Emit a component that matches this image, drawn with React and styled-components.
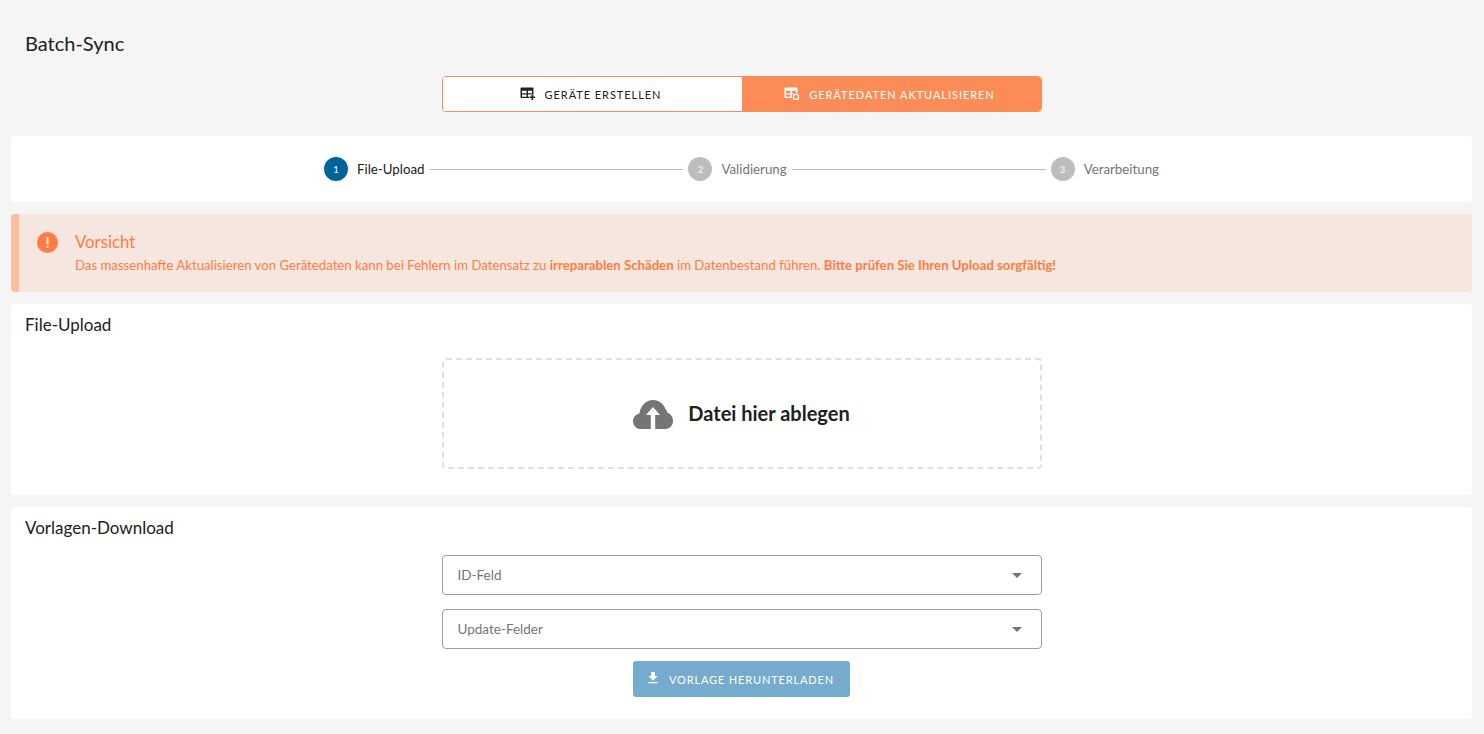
import React from 'react';
import styled, { createGlobalStyle } from 'styled-components';
import { MdFileDownload, MdArrowDropDown } from 'react-icons/md';

const Global = createGlobalStyle`
	html, body {
		margin: 0;
		background: #f5f5f5;
		font-family: "Lato", "Liberation Sans", sans-serif;
		color: #212121;
	}
`
const Page = styled.div`
	display: flex;
	flex-direction: column;
	padding: 0 12px 15px 11px;
	height: 734px;
	box-sizing: border-box;
	overflow: hidden;
	> * {
		flex-shrink: 0;
	}
`
const Title = styled.h1`
	margin: 0;
	padding: 31px 14px 0;
	height: 45px;
	font-size: 20px;
	line-height: 25px;
	font-weight: 400;
`
const Toggle = styled.div`
	display: flex;
	align-self: center;
	width: 600px;
	height: 36px;
	margin-bottom: 24px;
	box-sizing: border-box;
	border: 1px solid #fb8c57;
	border-radius: 4px;
	overflow: hidden;
	background: #fff;
`
const ToggleButton = styled.div`
	flex: 1;
	display: flex;
	align-items: center;
	justify-content: center;
	gap: 9px;
	padding-right: 3px;
	font-size: 11px;
	letter-spacing: 0.95px;
	background: ${p => (p.$active ? '#fb8c57' : '#fff')};
	color: ${p => (p.$active ? '#fff' : '#212121')};
	svg {
		margin-top: -3px;
	}
`
const Card = styled.section`
	background: #fff;
	border-radius: 4px;
	margin-bottom: 12px;
`
const Stepper = styled(Card)`
	display: flex;
	align-items: center;
	height: 66px;
	padding: 0 313px;
`
const Step = styled.div`
	display: flex;
	align-items: center;
	gap: 9px;
	font-size: 13.3px;
	color: ${p => (p.$active ? '#212121' : '#757575')};
`
const StepDot = styled.span`
	display: flex;
	align-items: center;
	justify-content: center;
	width: 24px;
	height: 24px;
	border-radius: 50%;
	font-size: 9.5px;
	color: #fff;
	background: ${p => (p.$active ? '#00629b' : '#bdbdbd')};
`
const StepLine = styled.div`
	flex: 1;
	height: 1px;
	margin: 0 5px;
	background: #bdbdbd;
`
const Alert = styled.div`
	display: flex;
	height: 78px;
	box-sizing: border-box;
	margin-bottom: 12px;
	padding: 18px 0 0 18px;
	gap: 17px;
	background: #f5e6e0;
	border-left: 8px solid #fdbd9f;
	border-radius: 4px;
	color: #ff7d40;
`
const AlertIcon = styled.svg`
	flex-shrink: 0;
`
const AlertBody = styled.div`
	display: flex;
	flex-direction: column;
	margin-top: -1px;
`
const AlertTitle = styled.div`
	font-size: 16.8px;
	line-height: 22px;
`
const AlertText = styled.div`
	font-size: 13.2px;
	line-height: 24px;
	b {
		font-weight: 700;
	}
`
const CardTitle = styled.h2`
	margin: 0;
	padding: 10px 14px 0;
	font-size: 17px;
	line-height: 22px;
	font-weight: 400;
`
const UploadCard = styled(Card)`
	height: 191px;
	display: flex;
	flex-direction: column;
`
const DropZone = styled.div`
	align-self: center;
	margin-top: 22px;
	width: 600px;
	height: 111px;
	box-sizing: border-box;
	padding-bottom: 2px;
	border: 2px dashed #e0e0e0;
	border-radius: 4px;
	display: flex;
	align-items: center;
	justify-content: center;
	gap: 15px;
	font-size: 20px;
	font-weight: 700;
	svg {
		color: #757575;
		margin-top: 4px;
	}
`
const TemplateCard = styled(Card)`
	height: 212px;
	display: flex;
	flex-direction: column;
	align-items: stretch;
`
const Select = styled.div`
	align-self: center;
	width: 600px;
	height: 40px;
	box-sizing: border-box;
	margin-top: ${p => p.$top}px;
	padding: 0 12px 0 15px;
	border: 1px solid #9e9e9e;
	border-radius: 4px;
	display: flex;
	align-items: center;
	justify-content: space-between;
	font-size: 13.5px;
	color: #757575;
`
const DownloadButton = styled.div`
	align-self: center;
	margin-top: 12px;
	width: 217px;
	height: 36px;
	box-sizing: border-box;
	padding-right: 4px;
	border-radius: 3px;
	background: #75abcd;
	color: #fff;
	display: flex;
	align-items: center;
	justify-content: center;
	gap: 8px;
	font-size: 11px;
	letter-spacing: 0.86px;
	svg {
		margin-top: -3px;
	}
`

const tableCells = 'M1.500 2.500h11a1 1 0 0 1 1 1v8.500a1 1 0 0 1-1 1h-11a1 1 0 0 1-1-1V3.500a1 1 0 0 1 1-1zM2 5.800v2.400h4.600V5.800zm6 0v2.400h4V5.800zM2 9.500v2.200h4.600V9.500zm6 0v2.200h4V9.500z';

const CreateIcon = () => (
	<svg width="16" height="16" viewBox="0 0 16 16" fill="currentColor">
		<path d={tableCells} fillRule="evenodd" />
		<path stroke="#fff" strokeWidth="1" paintOrder="stroke" d="M11.500 9.500h1.600v2h2v1.600h-2v2h-1.600v-2h-2v-1.600h2z" />
	</svg>
)

const UpdateIcon = () => (
	<svg width="16" height="16" viewBox="0 0 16 16" fill="currentColor">
		<path d={tableCells} fillRule="evenodd" />
		<rect x="8.800" y="8.800" width="6.400" height="6.400" rx="1.400" fill="#fb8c57" stroke="#fb8c57" strokeWidth="1" />
		<rect x="9.600" y="9.600" width="4.800" height="4.800" rx="1" fill="none" stroke="currentColor" strokeWidth="1.300" />
	</svg>
)

const CloudIcon = () => (
	<svg width="40" height="29" viewBox="0 0 40 29">
		<path
			fill="currentColor"
			d="M8 29C3.500 29 0 25.500 0 21.200 0 17.300 2.800 14.100 6.500 13.500 7.200 6 13.200 0 20 0c5.900 0 10.900 3.900 12.700 9.500 1 1 1.500 2 1.700 3.300 3.200.9 5.600 4.300 5.600 8.200C40 25.500 36.500 29 32 29z"
		/>
		<path fill="#fff" d="M20 7l7 8h-4.800v14h-4.400V15H13z" />
	</svg>
)

const App = () => (
	<Page>
		<Global />
		<Title>Batch-Sync</Title>
		<Toggle>
			<ToggleButton><CreateIcon />GERÄTE ERSTELLEN</ToggleButton>
			<ToggleButton $active><UpdateIcon />GERÄTEDATEN AKTUALISIEREN</ToggleButton>
		</Toggle>
		<Stepper>
			<Step $active><StepDot $active>1</StepDot>File-Upload</Step>
			<StepLine />
			<Step><StepDot>2</StepDot>Validierung</Step>
			<StepLine />
			<Step><StepDot>3</StepDot>Verarbeitung</Step>
		</Stepper>
		<Alert>
			<AlertIcon width="21" height="21" viewBox="0 0 21 21">
				<circle cx="10.500" cy="10.500" r="10.500" fill="#ff7d40" />
				<rect x="9.500" y="5" width="2" height="7.500" fill="#f5e6e0" />
				<rect x="9.500" y="14" width="2" height="2" fill="#f5e6e0" />
			</AlertIcon>
			<AlertBody>
				<AlertTitle>Vorsicht</AlertTitle>
				<AlertText>
					Das massenhafte Aktualisieren von Gerätedaten kann bei Fehlern im Datensatz zu <b>irreparablen Schäden</b> im Datenbestand führen. <b>Bitte prüfen Sie Ihren Upload sorgfältig!</b>
				</AlertText>
			</AlertBody>
		</Alert>
		<UploadCard>
			<CardTitle>File-Upload</CardTitle>
			<DropZone><CloudIcon />Datei hier ablegen</DropZone>
		</UploadCard>
		<TemplateCard>
			<CardTitle>Vorlagen-Download</CardTitle>
			<Select $top={16}>ID-Feld<MdArrowDropDown size={24} /></Select>
			<Select $top={14}>Update-Felder<MdArrowDropDown size={24} /></Select>
			<DownloadButton><MdFileDownload size={16} />VORLAGE HERUNTERLADEN</DownloadButton>
		</TemplateCard>
	</Page>
);

export default App;
